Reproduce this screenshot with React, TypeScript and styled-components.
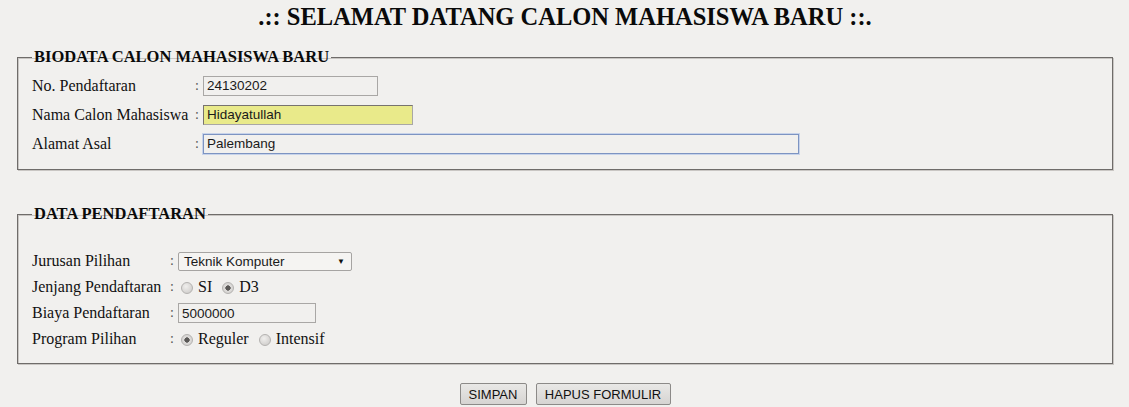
import React from 'react';
import styled, { createGlobalStyle } from 'styled-components';

const GlobalStyle = createGlobalStyle`
  html, body {
    margin: 0;
    padding: 0;
    background: #f1f0ee;
  }
  body {
    font-family: "Liberation Serif", "Times New Roman", serif;
    color: #111;
  }
`;

const Page = styled.div`
  padding: 5px 17px 0 17px;
  width: 1096px;
`;

const Title = styled.h1`
  margin: 0;
  text-align: center;
  font-size: 24.5px;
  line-height: 23px;
  font-weight: bold;
  color: #0a0a0a;
`;

const Box = styled.fieldset<{ $top: number; $padTop: number; $padBottom: number }>`
  margin: ${(p) => p.$top}px 0 0 0;
  padding: ${(p) => p.$padTop}px 14px ${(p) => p.$padBottom}px 14px;
  border: 1px solid #6f6c6a;
  box-shadow: 1px 1px 0 #c9c6c3, inset 1px 1px 0 #c9c6c3;
  min-width: 0;
`;

const Legend = styled.legend`
  padding: 0 2px;
  font-size: 16.5px;
  line-height: 18px;
  font-weight: bold;
  color: #0a0a0a;
`;

const Grid = styled.div<{ $labelWidth: number; $rowHeight: number }>`
  display: grid;
  grid-template-columns: ${(p) => p.$labelWidth}px 10px 1fr;
  grid-auto-rows: ${(p) => p.$rowHeight}px;
  align-items: center;
  font-size: 16px;
`;

const Label = styled.span`
  white-space: nowrap;
`;

const Colon = styled.span`
  padding-left: 2px;
  color: #555;
  font-size: 14px;
`;

const Field = styled.div`
  display: flex;
  align-items: center;
  gap: 7px;
`;

const TextInput = styled.input<{ $width: number; $fill?: string }>`
  box-sizing: border-box;
  width: ${(p) => p.$width}px;
  height: 20px;
  margin: 0;
  padding: 1px 3px;
  font-family: "Liberation Sans", Arial, sans-serif;
  font-size: 13.5px;
  color: #1a1a1a;
  background: ${(p) => p.$fill ?? '#f1f0ee'};
  border: 1px solid #a9a7a5;
  border-top-color: ${(p) => (p.$fill ? '#77736e' : '#a9a7a5')};
  border-left-color: ${(p) => (p.$fill ? '#77736e' : '#a9a7a5')};
  outline: none;
  caret-color: #000;
  &:focus {
    border: 1px solid #7d94c2;
    box-shadow: 0 0 0 1px #c7d3ea;
  }
`;

const Select = styled.div`
  box-sizing: border-box;
  width: 174px;
  height: 19px;
  display: flex;
  align-items: center;
  justify-content: space-between;
  padding: 0 6px 0 5px;
  font-family: "Liberation Sans", Arial, sans-serif;
  font-size: 13.5px;
  color: #1a1a1a;
  background: #f5f4f2;
  border: 1px solid #a6a4a2;
  border-radius: 2px;
`;

const Arrow = styled.span`
  font-size: 8px;
  color: #111;
`;

const Radio = styled.input.attrs({ type: 'radio' })`
  appearance: none;
  width: 12px;
  height: 12px;
  margin: 0 5px 0 3px;
  border-radius: 50%;
  border: 1px solid #b4b2b0;
  background: radial-gradient(circle at 40% 35%, #f0efed, #c9c7c5);
  position: relative;
  top: 1px;
  &:checked {
    background: radial-gradient(circle, #5a5856 0 2.4px, #dedcda 2.9px, #cfcdcb);
  }
`;

const Choice = styled.label`
  display: inline-flex;
  align-items: center;
`;

const Actions = styled.div`
  display: flex;
  justify-content: center;
  gap: 9px;
  margin-top: 19px;
`;

const Button = styled.button<{ $width: number }>`
  box-sizing: border-box;
  width: ${(p) => p.$width}px;
  height: 22px;
  padding: 0;
  font-family: "Liberation Sans", Arial, sans-serif;
  font-size: 13px;
  color: #111;
  background: linear-gradient(#e9e8e6, #d6d4d2);
  border: 1px solid #8c8a88;
  border-radius: 2px;
`;

export default function App() {
  return (
    <>
      <GlobalStyle />
      <Page>
        <Title>.:: SELAMAT DATANG CALON MAHASISWA BARU ::.</Title>

        <Box $top={20} $padTop={5} $padBottom={11}>
          <Legend>BIODATA CALON MAHASISWA BARU</Legend>
          <Grid $labelWidth={161} $rowHeight={29}>
            <Label>No. Pendaftaran</Label>
            <Colon>:</Colon>
            <Field>
              <TextInput $width={175} defaultValue="24130202" readOnly />
            </Field>
            <Label>Nama Calon Mahasiswa</Label>
            <Colon>:</Colon>
            <Field>
              <TextInput $width={210} $fill="#e9ea8a" defaultValue="Hidayatullah" />
            </Field>
            <Label>Alamat Asal</Label>
            <Colon>:</Colon>
            <Field>
              <TextInput $width={596} defaultValue="Palembang" autoFocus />
            </Field>
          </Grid>
        </Box>

        <Box $top={35} $padTop={25} $padBottom={11}>
          <Legend>DATA PENDAFTARAN</Legend>
          <Grid $labelWidth={136} $rowHeight={26}>
            <Label>Jurusan Pilihan</Label>
            <Colon>:</Colon>
            <Field>
              <Select>
                <span>Teknik Komputer</span>
                <Arrow>▼</Arrow>
              </Select>
            </Field>
            <Label>Jenjang Pendaftaran</Label>
            <Colon>:</Colon>
            <Field>
              <Choice><Radio name="jenjang" />SI</Choice>
              <Choice><Radio name="jenjang" defaultChecked />D3</Choice>
            </Field>
            <Label>Biaya Pendaftaran</Label>
            <Colon>:</Colon>
            <Field>
              <TextInput $width={138} defaultValue="5000000" />
            </Field>
            <Label>Program Pilihan</Label>
            <Colon>:</Colon>
            <Field>
              <Choice><Radio name="program" defaultChecked />Reguler</Choice>
              <Choice><Radio name="program" />Intensif</Choice>
            </Field>
          </Grid>
        </Box>

        <Actions>
          <Button $width={67}>SIMPAN</Button>
          <Button $width={135}>HAPUS FORMULIR</Button>
        </Actions>
      </Page>
    </>
  );
}
